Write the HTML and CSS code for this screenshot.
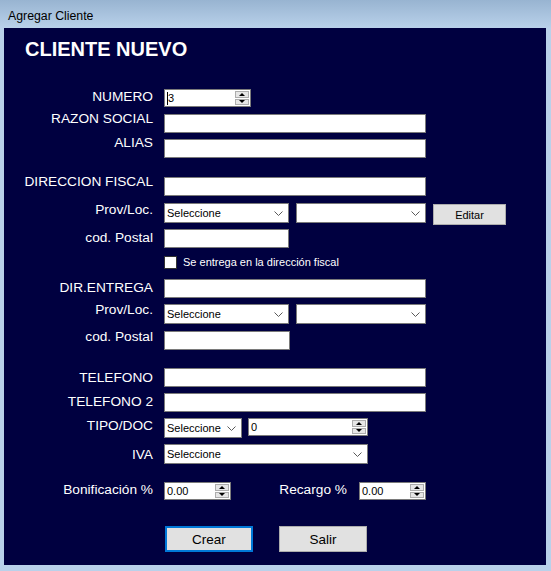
FILE: index.html
```html
<!DOCTYPE html>
<html lang="es">
<head>
<meta charset="utf-8">
<title>Agregar Cliente</title>
<link rel="stylesheet" href="styles.css">
</head>
<body>
<div class="titlebar">Agregar Cliente</div>
<div class="panel">
  <div class="heading">CLIENTE NUEVO</div>

  <div class="row mt28">
    <div class="lbl">NUMERO</div>
    <div class="spin w87">
      <div class="val"><span class="caret"></span>3</div>
      <div class="btns"><div class="sb"><span class="tri-up"></span></div><div class="sb"><span class="tri-down"></span></div></div>
    </div>
  </div>

  <div class="row mt7">
    <div class="lbl up3">RAZON SOCIAL</div>
    <div class="tb w262"></div>
  </div>

  <div class="row mt6">
    <div class="lbl up4">ALIAS</div>
    <div class="tb w262"></div>
  </div>

  <div class="row mt19">
    <div class="lbl up3">DIRECCION FISCAL</div>
    <div class="tb w262"></div>
  </div>

  <div class="row mt7">
    <div class="lbl up1">Prov/Loc.</div>
    <div class="cb w125"><span>Seleccione</span><svg class="chev" width="9" height="5" viewBox="0 0 9 5"><polyline points="0.5,0.5 4.5,4.5 8.5,0.5"/></svg></div>
    <div class="cb w130 ml7"><span></span><svg class="chev" width="9" height="5" viewBox="0 0 9 5"><polyline points="0.5,0.5 4.5,4.5 8.5,0.5"/></svg></div>
    <div class="btn small ml7">Editar</div>
  </div>

  <div class="row mt4">
    <div class="lbl dn1">cod. Postal</div>
    <div class="tb w125"></div>
  </div>

  <div class="row mt8 check-row">
    <div class="check"></div>
    <div class="check-text">Se entrega en la dirección fiscal</div>
  </div>

  <div class="row mt10">
    <div class="lbl dn1">DIR.ENTREGA</div>
    <div class="tb w262"></div>
  </div>

  <div class="row mt6">
    <div class="lbl up2">Prov/Loc.</div>
    <div class="cb w125"><span>Seleccione</span><svg class="chev" width="9" height="5" viewBox="0 0 9 5"><polyline points="0.5,0.5 4.5,4.5 8.5,0.5"/></svg></div>
    <div class="cb w130 ml7"><span></span><svg class="chev" width="9" height="5" viewBox="0 0 9 5"><polyline points="0.5,0.5 4.5,4.5 8.5,0.5"/></svg></div>
  </div>

  <div class="row mt7">
    <div class="lbl up2">cod. Postal</div>
    <div class="tb w126"></div>
  </div>

  <div class="row mt18">
    <div class="lbl dn2">TELEFONO</div>
    <div class="tb w262"></div>
  </div>

  <div class="row mt6">
    <div class="lbl dn1">TELEFONO 2</div>
    <div class="tb w262"></div>
  </div>

  <div class="row mt6">
    <div class="lbl">TIPO/DOC</div>
    <div class="cb w78 h21"><span>Seleccione</span><svg class="chev" width="9" height="5" viewBox="0 0 9 5"><polyline points="0.5,0.5 4.5,4.5 8.5,0.5"/></svg></div>
    <div class="spin w120 h19 ml6">
      <div class="val">0</div>
      <div class="btns"><div class="sb"><span class="tri-up"></span></div><div class="sb"><span class="tri-down"></span></div></div>
    </div>
  </div>

  <div class="row mt6">
    <div class="lbl dn3">IVA</div>
    <div class="cb w204 h21"><span>Seleccione</span><svg class="chev" width="9" height="5" viewBox="0 0 9 5"><polyline points="0.5,0.5 4.5,4.5 8.5,0.5"/></svg></div>
  </div>

  <div class="row mt18">
    <div class="lbl">Bonificación %</div>
    <div class="spin w67 h19">
      <div class="val">0.00</div>
      <div class="btns"><div class="sb"><span class="tri-up"></span></div><div class="sb"><span class="tri-down"></span></div></div>
    </div>
    <div class="lbl lbl-r">Recargo %</div>
    <div class="spin w67 h19">
      <div class="val">0.00</div>
      <div class="btns"><div class="sb"><span class="tri-up"></span></div><div class="sb"><span class="tri-down"></span></div></div>
    </div>
  </div>

  <div class="row mt26 actions">
    <div class="btn big default">Crear</div>
    <div class="btn big">Salir</div>
  </div>
</div>
</body>
</html>
```

FILE: styles.css
```css
html, body {
  margin: 0;
  padding: 0;
}
body {
  width: 551px;
  height: 571px;
  overflow: hidden;
  background: #b9d1ea;
  font-family: "Liberation Sans", Arial, sans-serif;
}
.titlebar {
  height: 28px;
  box-sizing: border-box;
  padding: 9px 0 0 8px;
  line-height: 14px;
  font-size: 12.3px;
  color: #000;
  background: linear-gradient(#98b4d1, #b9d1ea);
}
.panel {
  margin-left: 4px;
  width: 542px;
  height: 537px;
  box-sizing: border-box;
  padding-top: 10px;
  background: #000040;
  color: #fff;
}
.heading {
  margin-left: 21px;
  font-weight: bold;
  font-size: 20px;
  line-height: 23px;
}
.row {
  display: flex;
  align-items: flex-start;
}
.mt4 { margin-top: 4px; }
.mt6 { margin-top: 6px; }
.mt7 { margin-top: 7px; }
.mt8 { margin-top: 8px; }
.mt10 { margin-top: 10px; }
.mt18 { margin-top: 18px; }
.mt19 { margin-top: 19px; }
.mt26 { margin-top: 26px; }
.mt28 { margin-top: 28px; }
.ml6 { margin-left: 6px; }
.ml7 { margin-left: 7px; }

.lbl {
  width: 149px;
  margin-right: 11px;
  text-align: right;
  white-space: nowrap;
  font-size: 13.7px;
  line-height: 15px;
}
.up1 { margin-top: -1px; }
.up2 { margin-top: -2px; }
.up3 { margin-top: -3px; }
.up4 { margin-top: -4px; }
.dn1 { margin-top: 1px; }
.dn2 { margin-top: 2px; }
.dn3 { margin-top: 3px; }
.lbl-r {
  width: 116px;
  margin-right: 12px;
}

.tb {
  height: 19px;
  box-sizing: border-box;
  background: #fff;
  border: 1px solid #7a7a7a;
}
.w67 { width: 67px; }
.w78 { width: 78px; }
.w87 { width: 87px; }
.w120 { width: 120px; }
.w125 { width: 125px; }
.w126 { width: 126px; }
.w130 { width: 130px; }
.w204 { width: 204px; }
.w262 { width: 262px; }
.h19 { height: 19px; }
.h21 { height: 21px; }

.cb {
  height: 20px;
  box-sizing: border-box;
  background: #fff;
  border: 1px solid #7a7a7a;
  color: #000;
  font-size: 11px;
  padding-left: 2px;
  display: flex;
  align-items: center;
  justify-content: space-between;
}
.chev {
  margin-right: 5px;
  fill: none;
  stroke: #5a5a5a;
  stroke-width: 1;
}

.spin {
  height: 18px;
  box-sizing: border-box;
  background: #fff;
  border: 1px solid #7a7a7a;
  display: flex;
  color: #000;
}
.spin .val {
  flex: 1;
  font-size: 11px;
  padding-left: 2px;
  display: flex;
  align-items: center;
}
.caret {
  width: 1px;
  height: 13px;
  background: #000;
}
.btns {
  width: 15px;
  display: flex;
  flex-direction: column;
  gap: 1px;
  padding: 1px 1px 1px 0;
  box-sizing: border-box;
}
.sb {
  flex: 1;
  background: #e6e6e6;
  border: 1px solid #adadad;
  display: flex;
  align-items: center;
  justify-content: center;
}
.tri-up {
  width: 0;
  height: 0;
  border-left: 3px solid transparent;
  border-right: 3px solid transparent;
  border-bottom: 3px solid #000;
}
.tri-down {
  width: 0;
  height: 0;
  border-left: 3px solid transparent;
  border-right: 3px solid transparent;
  border-top: 3px solid #000;
}

.btn {
  box-sizing: border-box;
  background: #e1e1e1;
  border: 1px solid #adadad;
  color: #000;
  display: flex;
  align-items: center;
  justify-content: center;
}
.btn.small {
  width: 73px;
  height: 21px;
  margin-top: 1px;
  font-size: 11px;
}
.btn.big {
  width: 88px;
  height: 26px;
  font-size: 13.5px;
}
.btn.default {
  border: 2px solid #0078d7;
}
.actions {
  margin-left: 161px;
  gap: 26px;
}

.check-row {
  margin-left: 160px;
  align-items: center;
}
.check {
  width: 13px;
  height: 13px;
  box-sizing: border-box;
  background: #fff;
  border: 1px solid #333;
}
.check-text {
  margin-left: 6px;
  font-size: 11px;
  line-height: 13px;
}
```
